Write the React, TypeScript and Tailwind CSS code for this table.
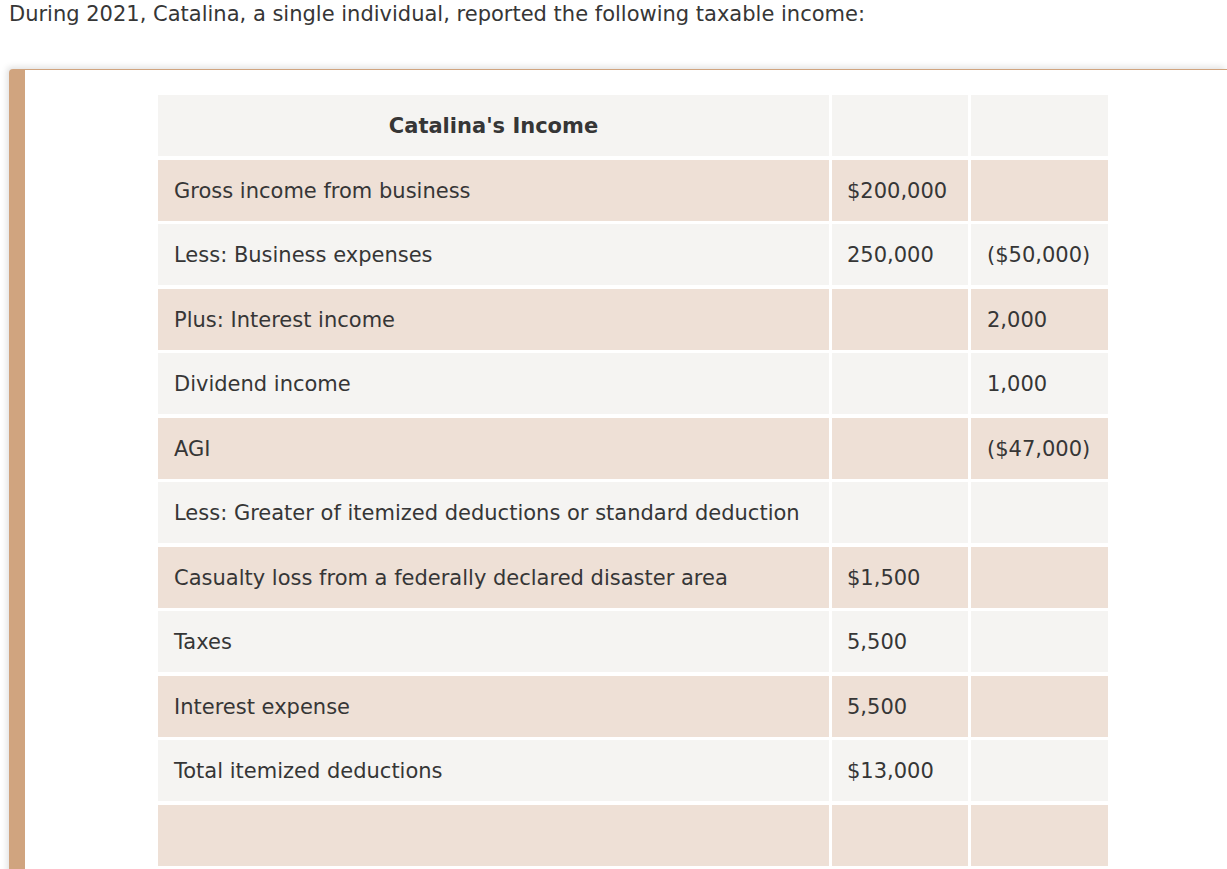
import React from 'react';

type Row = { label: string; a?: string; b?: string };

const rows: Row[] = [
  { label: 'Gross income from business', a: '$200,000' },
  { label: 'Less: Business expenses', a: '250,000', b: '($50,000)' },
  { label: 'Plus: Interest income', b: '2,000' },
  { label: 'Dividend income', b: '1,000' },
  { label: 'AGI', b: '($47,000)' },
  { label: 'Less: Greater of itemized deductions or standard deduction' },
  { label: 'Casualty loss from a federally declared disaster area', a: '$1,500' },
  { label: 'Taxes', a: '5,500' },
  { label: 'Interest expense', a: '5,500' },
  { label: 'Total itemized deductions', a: '$13,000' },
  { label: '' },
];

const Cell: React.FC<{ w: string; bg: string; children?: React.ReactNode }> = ({ w, bg, children }) => (
  <div className={`${w} ${bg} flex h-[61px] shrink-0 items-center whitespace-nowrap px-4 pt-[3px]`}>{children}</div>
);

export default function App() {
  return (
    <div
      className="h-[869px] overflow-hidden bg-white text-[#363636]"
      style={{ fontFamily: '"DejaVu Sans", Verdana, sans-serif' }}
    >
      <p className="pl-[9px] pt-[2px] text-[21px] leading-[24px]">
        During 2021, Catalina, a single individual, reported the following taxable income:
      </p>
      <div className="ml-[9px] mt-[43px] rounded-tl-[4px] border-l-[16px] border-t border-[#d0a47f] bg-white pb-[20px] shadow-[-2px_-2px_6px_rgba(0,0,0,0.12)]">
        <div className="flex flex-col gap-[3.5px] pl-[133px] pt-[25px]">
          <div className="flex gap-[3px]">
            <Cell w="w-[671px] justify-center" bg="bg-[#f5f4f2]">
              <span className="text-[21px] font-bold">Catalina's Income</span>
            </Cell>
            <Cell w="w-[136px]" bg="bg-[#f5f4f2]" />
            <Cell w="w-[137px]" bg="bg-[#f5f4f2]" />
          </div>
          {rows.map((r, i) => {
            const bg = i % 2 === 0 ? 'bg-[#eee0d6]' : 'bg-[#f5f4f2]';
            return (
              <div key={i} className="flex gap-[3px] text-[21px]">
                <Cell w="w-[671px]" bg={bg}>{r.label}</Cell>
                <Cell w="w-[136px] pl-[15px]" bg={bg}>{r.a}</Cell>
                <Cell w="w-[137px]" bg={bg}>{r.b}</Cell>
              </div>
            );
          })}
        </div>
      </div>
    </div>
  );
}
